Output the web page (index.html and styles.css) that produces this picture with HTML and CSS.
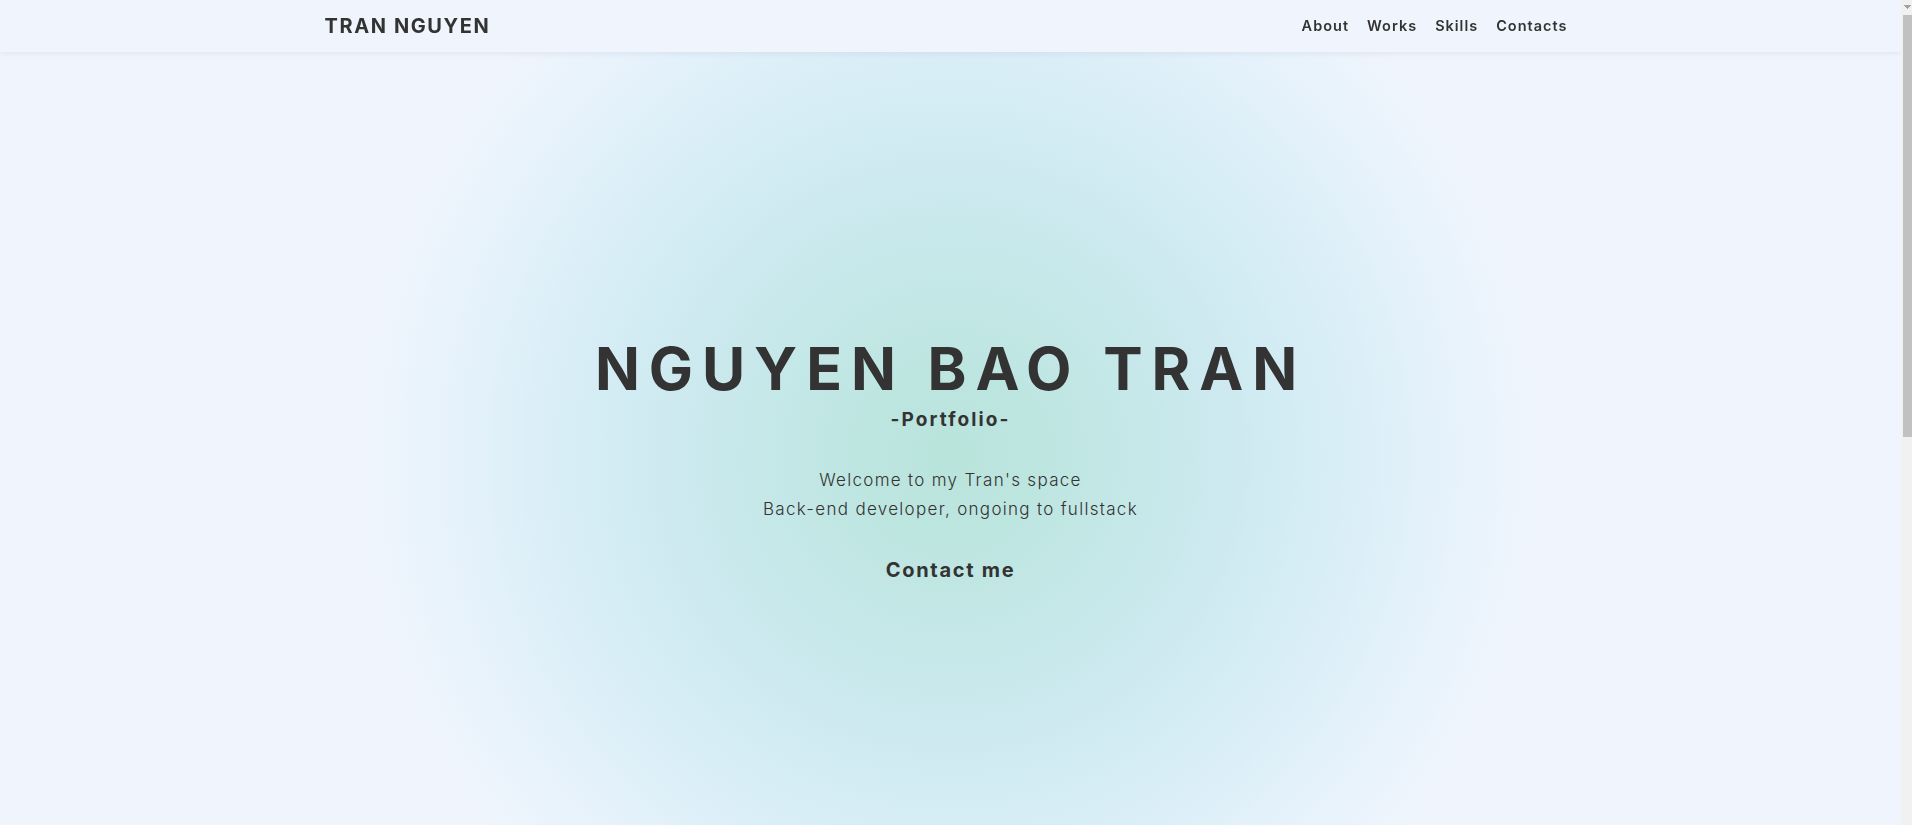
FILE: index.html
```html
<!DOCTYPE html>
<html lang="en">
<head>
<meta charset="utf-8">
<title>Tran Nguyen - Portfolio</title>
<link rel="stylesheet" href="styles.css">
</head>
<body>
<div class="page">
  <header class="topbar">
    <div class="container topbar-inner">
      <a class="brand" href="#">TRAN NGUYEN</a>
      <nav class="nav">
        <a href="#about">About</a>
        <a href="#works">Works</a>
        <a href="#skills">Skills</a>
        <a href="#contacts">Contacts</a>
      </nav>
    </div>
  </header>
  <main>
    <section class="hero">
      <div class="hero-content">
        <h1 class="hero-title">NGUYEN BAO TRAN</h1>
        <p class="hero-sub">-Portfolio-</p>
        <p class="hero-text">Welcome to my Tran's space<br>Back-end developer, ongoing to fullstack</p>
        <a class="hero-cta" href="#contacts">Contact me</a>
      </div>
    </section>
    <section class="below" id="about"></section>
  </main>
</div>
<div class="scrollbar" aria-hidden="true">
  <div class="scrollbar-up"></div>
  <div class="scrollbar-thumb"></div>
</div>
</body>
</html>
```
FILE: styles.css
```css
html, body {
  margin: 0;
  padding: 0;
}
body {
  font-family: Inter, "Open Sans", sans-serif;
  color: #333333;
  background: #f0f5fd;
}
a {
  color: inherit;
  text-decoration: none;
}
.page {
  margin-right: 11px;
}
.container {
  max-width: 1252px;
  margin: 0 auto;
}
.topbar {
  position: fixed;
  top: 0;
  left: 0;
  right: 11px;
  height: 52px;
  background: #f0f5fd;
  box-shadow: 0 1px 6px rgba(150, 165, 190, 0.22);
  z-index: 10;
}
.topbar-inner {
  height: 100%;
  display: flex;
  align-items: center;
  justify-content: space-between;
}
.brand {
  font-size: 20px;
  font-weight: 700;
  letter-spacing: 1.6px;
  color: #333;
}
.nav {
  display: flex;
  margin-top: -2px;
}
.nav a {
  padding: 0 9px;
  font-size: 14.5px;
  font-weight: 600;
  letter-spacing: 1px;
  color: #333;
}
.hero {
  height: 825px;
  background: radial-gradient(circle at 950px 455px,
    #b8e4db 0px,
    #bfe6e2 110px,
    #cbe9ee 260px,
    #d9eef7 400px,
    #e6f2fb 500px,
    #f0f5fd 600px);
  box-sizing: border-box;
  padding-top: 339px;
}
.hero-content {
  display: flex;
  flex-direction: column;
  align-items: center;
  text-align: center;
}
.hero-title {
  margin: 0;
  font-size: 59px;
  line-height: 59px;
  font-weight: 700;
  letter-spacing: 8.9px;
  color: #333;
}
.hero-sub {
  margin: 11px 0 0;
  font-size: 19px;
  line-height: 22px;
  font-weight: 700;
  letter-spacing: 2.1px;
}
.hero-text {
  margin: 35px 0 0;
  font-size: 17px;
  line-height: 29px;
  font-weight: 300;
  letter-spacing: 1.3px;
}
.hero-cta {
  display: block;
  margin-top: 34px;
  font-size: 20px;
  line-height: 24px;
  font-weight: 700;
  letter-spacing: 1.7px;
}
.below {
  height: 730px;
  background: #f0f5fd;
}
.scrollbar {
  position: fixed;
  top: 0;
  right: 0;
  width: 11px;
  height: 100%;
  background: #f1f1f1;
  z-index: 20;
}
.scrollbar-up {
  height: 15px;
  background-image:
    linear-gradient(to top right, transparent 50%, #a3a3a3 50%),
    linear-gradient(to top left, transparent 50%, #a3a3a3 50%);
  background-size: 4px 4px, 4px 4px;
  background-position: 2px 5px, 6px 5px;
  background-repeat: no-repeat;
}
.scrollbar-thumb {
  margin-left: 2px;
  height: 422px;
  background: #c1c1c1;
}
```
